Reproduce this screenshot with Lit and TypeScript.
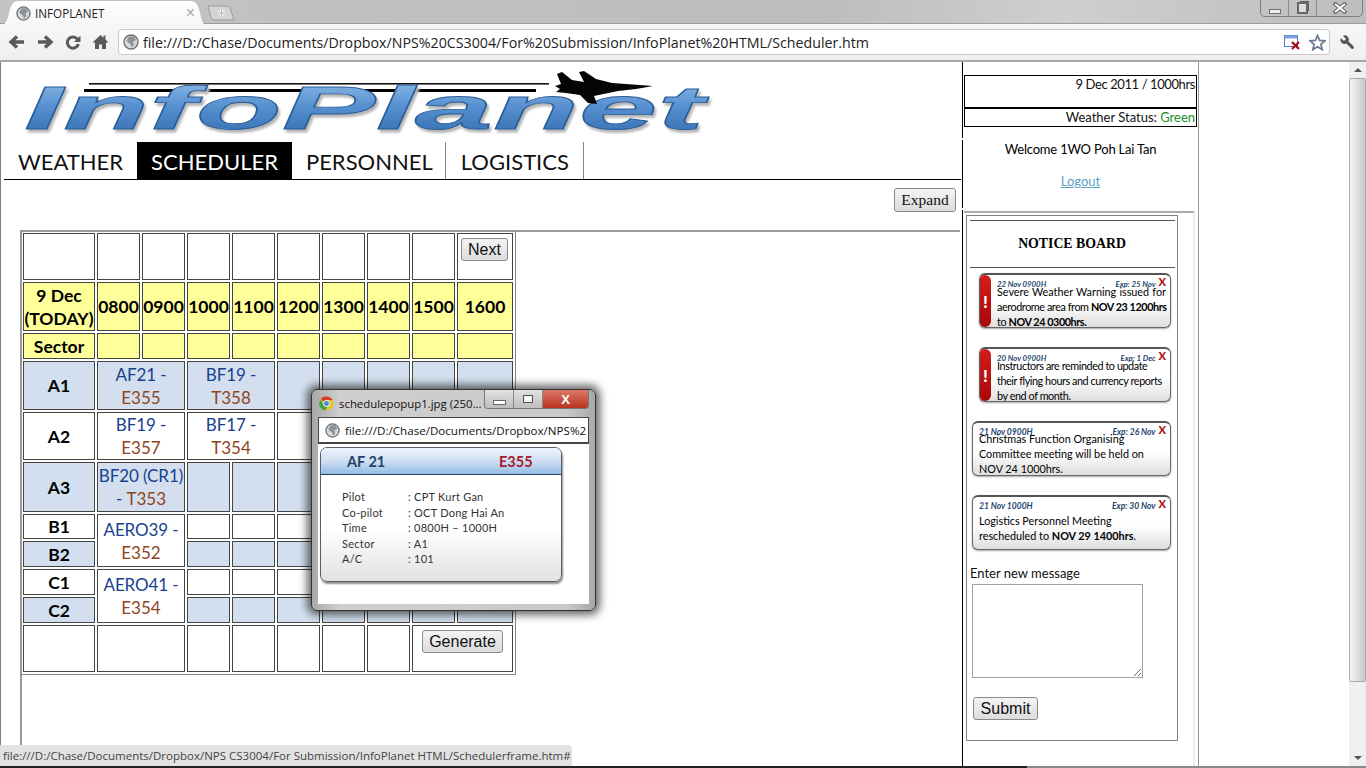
import { LitElement, html, css, svg } from 'lit';
import { customElement } from 'lit/decorators.js';
import { unsafeHTML } from 'lit/directives/unsafe-html.js';

const globe = (size: number) => html`
  <svg width=${size} height=${size} viewBox="0 0 16 16" aria-hidden="true">
    <circle cx="8" cy="8" r="7" fill="#d6dade" stroke="#6d6f72" stroke-width="1.4" />
    <path d="M6 2.5 L11 2.5 L13 6 L10 8 L11 11 L8.5 13.5 L7.5 10 L5 8.5 L3.5 6.5Z" fill="#8e9397" />
  </svg>
`;

type Cell = { t?: string; b?: string; span?: number; rows?: number };
type Row = { h: number; cls: string; head?: string; cells: Cell[] };

const blanks = (n: number): Cell[] => Array.from({ length: n }, () => ({}));

const ROWS: Row[] = [
  { h: 47, cls: 'plain', head: '', cells: blanks(8) },
  { h: 49, cls: 'yellow', head: '9 Dec<br>(TODAY)', cells: [] },
  { h: 26, cls: 'yellow', head: 'Sector', cells: blanks(9) },
  { h: 49, cls: 'blue', head: 'A1', cells: [{ t: 'AF21 -', b: 'E355', span: 2 }, { t: 'BF19 -', b: 'T358', span: 2 }, ...blanks(5)] },
  { h: 48, cls: 'plain', head: 'A2', cells: [{ t: 'BF19 -', b: 'E357', span: 2 }, { t: 'BF17 -', b: 'T354', span: 2 }, ...blanks(5)] },
  { h: 50, cls: 'blue', head: 'A3', cells: [{ t: 'BF20 (CR1)', b: 'T353', span: 2 }, ...blanks(7)] },
  { h: 25, cls: 'plain', head: 'B1', cells: [{ t: 'AERO39 -', b: 'E352', span: 2, rows: 2 }, ...blanks(7)] },
  { h: 26, cls: 'blue', head: 'B2', cells: blanks(7) },
  { h: 26, cls: 'plain', head: 'C1', cells: [{ t: 'AERO41 -', b: 'E354', span: 2, rows: 2 }, ...blanks(7)] },
  { h: 26, cls: 'blue', head: 'C2', cells: blanks(7) },
];

const HOURS = ['0800', '0900', '1000', '1100', '1200', '1300', '1400', '1500', '1600'];

@customElement('schedule-table')
export class ScheduleTable extends LitElement {
  private renderRow(row: Row, i: number) {
    if (i === 0) {
      return html`<tr style="height:${row.h}px" class=${row.cls}>
        <td></td>${row.cells.map(() => html`<td></td>`)}
        <td class="top"><button class="btn next">Next</button></td>
      </tr>`;
    }
    if (i === 1) {
      return html`<tr style="height:${row.h}px" class=${row.cls}>
        <th>${unsafeHTML(row.head)}</th>${HOURS.map((h) => html`<th>${h}</th>`)}
      </tr>`;
    }
    return html`<tr style="height:${row.h}px" class=${row.cls}>
      <th>${unsafeHTML(row.head)}</th>
      ${row.cells.map(
        (c) => html`<td colspan=${c.span ?? 1} rowspan=${c.rows ?? 1} class=${c.rows ? 'merged' : ''}>
          ${c.t
            ? html`<span class="flight">${c.t}</span>
                <div class="codeline">${c.t === 'BF20 (CR1)' ? html`<span class="flight">- </span>` : ''}<span class="code">${c.b}</span></div>`
            : ''}
        </td>`
      )}
    </tr>`;
  }

  render() {
    return html`
      <table>
        <colgroup>
          <col style="width:72px" />
          ${HOURS.slice(0, 8).map(() => html`<col style="width:43px" />`)}
          <col style="width:56px" />
        </colgroup>
        ${ROWS.map((r, i) => this.renderRow(r, i))}
        <tr class="plain" style="height:47px">
          <td></td><td colspan="2"></td><td></td><td></td><td></td><td></td><td></td>
          <td colspan="2" class="top"><button class="btn generate">Generate</button></td>
        </tr>
      </table>
    `;
  }

  static styles = css`
    :host {
      display: block;
      margin: 0 2px 0 19px;
      height: 100%;
      border-top: 2px solid #999;
      border-left: 2px solid #999;
    }
    table {
      table-layout: fixed;
      width: 495px;
      margin: -1px 0 0 -1px;
      border-collapse: separate;
      border-spacing: 2px;
      border-right: 1px solid #888;
      border-bottom: 1px solid #888;
      font-family: Lato, sans-serif;
      font-size: 17.5px;
      line-height: 23px;
      color: #000;
    }
    td,
    th {
      box-sizing: border-box;
      padding: 0;
      border: 1px solid #444;
      text-align: center;
      vertical-align: middle;
      overflow: hidden;
    }
    td.top {
      vertical-align: top;
    }
    th {
      font-weight: 700;
    }
    .yellow td,
    .yellow th {
      background: #ffff99;
    }
    .blue td,
    .blue th {
      background: #d3dfee;
    }
    .plain td,
    .plain th,
    td.merged {
      background: #fff !important;
    }
    .flight {
      color: #173f8e;
      font-size: 17px;
      letter-spacing: -0.1px;
      white-space: nowrap;
    }
    .codeline {
      white-space: nowrap;
    }
    .code {
      color: #8f4420;
      font-size: 17px;
    }
    .btn {
      box-sizing: border-box;
      height: 23px;
      margin-top: 4px;
      padding: 0;
      border: 1px solid #8a8a8a;
      border-radius: 3px;
      background: linear-gradient(#f4f4f4, #dcdcdc);
      font-family: 'Liberation Sans', sans-serif;
      font-size: 16px;
      color: #111;
    }
    .next {
      width: 47px;
      display: block;
      margin-left: 3px;
    }
    .generate {
      width: 81px;
    }
  `;
}

type Notice = { date: string; exp: string; lines: string[]; alert?: boolean; low?: boolean; high?: boolean; just?: boolean };

const NOTICES: Notice[] = [
  {
    date: '22 Nov 0900H',
    exp: 'Exp: 25 Nov',
    alert: true,
    just: true,
    lines: ['Severe Weather Warning issued for', 'aerodrome area from <b>NOV 23 1200hrs</b>', 'to <b>NOV 24 0300hrs.</b>'],
  },
  {
    date: '20 Nov 0900H',
    exp: 'Exp: 1 Dec',
    alert: true,
    lines: ['Instructors are reminded to update', 'their flying hours and currency reports', 'by end of month.'],
  },
  {
    date: '21 Nov 0900H',
    exp: 'Exp: 26 Nov',
    high: true,
    lines: ['Christmas Function Organising', 'Committee meeting will be held on', 'NOV 24 1000hrs.'],
  },
  {
    date: '21 Nov 1000H',
    exp: 'Exp: 30 Nov',
    low: true,
    lines: ['Logistics Personnel Meeting', 'rescheduled to <b>NOV 29 1400hrs</b>.'],
  },
];

@customElement('notice-board')
export class NoticeBoard extends LitElement {
  render() {
    return html`
      <hr />
      <div class="title">NOTICE BOARD</div>
      <hr />
      <div class="list">
        ${NOTICES.map(
          (n) => html`
            <div class="card ${n.alert ? 'alert' : ''}">
              ${n.alert ? html`<div class="flag">!</div>` : ''}
              <div class="inner">
                <div class="meta">
                  <span>${n.date}</span>
                  <span class="exp">${n.exp}</span>
                  <span class="x">X</span>
                </div>
                <div class="text ${n.low ? 'low' : ''} ${n.high ? 'high' : ''} ${n.just ? 'just' : ''}">
                  ${n.lines.map((l) => html`<div class="line">${unsafeHTML(l)}</div>`)}
                </div>
              </div>
            </div>
          `
        )}
      </div>
      <div class="label">Enter new message</div>
      <textarea></textarea>
      <button class="submit">Submit</button>
    `;
  }

  static styles = css`
    :host {
      display: block;
      box-sizing: border-box;
      width: 212px;
      height: 526px;
      margin-left: 2px;
      border: 1px solid #808080;
      font-family: Lato, sans-serif;
    }
    hr {
      height: 1px;
      margin: 4px 2px 0 3px;
      border: 0;
      background: #555;
    }
    .title {
      height: 46px;
      display: flex;
      align-items: center;
      justify-content: center;
      font-family: 'Liberation Serif', serif;
      font-size: 13.8px;
      font-weight: 700;
    }
    .title + hr {
      margin-top: 0;
    }
    .list {
      display: flex;
      flex-direction: column;
      gap: 19px;
      margin-top: 5px;
      align-items: flex-end;
      padding-right: 6px;
    }
    .card {
      box-sizing: border-box;
      width: 199px;
      height: 55px;
      display: flex;
      overflow: hidden;
      border: 1px solid #666;
      border-top: 2px solid #555;
      border-radius: 6px;
      background: linear-gradient(#fff 55%, #dedede);
      box-shadow: 0 1px 2px rgba(0, 0, 0, 0.35);
    }
    .card.alert {
      width: 192px;
    }
    .flag {
      flex: none;
      width: 11px;
      display: flex;
      align-items: center;
      justify-content: center;
      background: linear-gradient(#d41c1c, #a80808);
      border-radius: 0 6px 6px 0;
      color: #fff;
      font-size: 17px;
      font-weight: 900;
    }
    .inner {
      flex: 1;
      min-width: 0;
      padding: 4px 4px 0 6px;
    }
    .meta {
      display: flex;
      height: 10px;
      font-size: 8.5px;
      line-height: 10px;
      font-style: italic;
      font-weight: 700;
      color: #25466e;
      white-space: nowrap;
    }
    .alert .meta {
      font-size: 7.8px;
    }
    .exp {
      margin-left: auto;
    }
    .x {
      margin-left: 3px;
      margin-top: -2px;
      color: #b01010;
      font-size: 11px;
      font-style: normal;
      font-weight: 900;
    }
    .text {
      margin-top: -4px;
      font-size: 10.8px;
      line-height: 14.8px;
      color: #000;
    }
    .alert .line {
      letter-spacing: -0.42px;
    }
    .text.high {
      margin-top: -5px;
    }
    .text.low {
      margin-top: 3px;
    }
    .line {
      white-space: nowrap;
    }
    .text.just .line:first-child {
      letter-spacing: 0;
      white-space: normal;
      text-align: justify;
      text-align-last: justify;
    }
    .label {
      margin: 14px 0 0 3px;
      font-size: 13px;
      line-height: 19px;
      color: #111;
    }
    textarea {
      display: block;
      box-sizing: border-box;
      width: 171px;
      height: 94px;
      margin: 1px 0 0 5px;
      border: 1px solid #a0a0a0;
    }
    .submit {
      display: block;
      box-sizing: border-box;
      width: 65px;
      height: 23px;
      margin: 19px 0 0 6px;
      padding: 0;
      border: 1px solid #8a8a8a;
      border-radius: 3px;
      background: linear-gradient(#f4f4f4, #dcdcdc);
      font-family: 'Liberation Sans', sans-serif;
      font-size: 16px;
      color: #111;
    }
  `;
}

const POPUP_ROWS = [
  ['Pilot', ': CPT Kurt Gan'],
  ['Co-pilot', ': OCT Dong Hai An'],
  ['Time', ': 0800H – 1000H'],
  ['Sector', ': A1'],
  ['A/C', ': 101'],
];

@customElement('popup-window')
export class PopupWindow extends LitElement {
  render() {
    return html`
      <div class="titlebar">
        <svg class="logo" width="15" height="15" viewBox="0 0 16 16" aria-hidden="true">
          <circle cx="8" cy="8" r="7.5" fill="#e2c52c" />
          <path d="M8 .5a7.5 7.5 0 0 1 6.5 3.75H8a3.75 3.75 0 0 0-3.4 2.2L2 2.6A7.5 7.5 0 0 1 8 .5z" fill="#d8392c" />
          <path d="M1.6 3.6 5 9.8a3.75 3.75 0 0 0 3.7 1.9L6.6 15.4A7.5 7.5 0 0 1 1.6 3.6z" fill="#3fa648" />
          <circle cx="8" cy="8" r="3.2" fill="#4a86d8" stroke="#fff" stroke-width="1" />
        </svg>
        <span class="name">schedulepopup1.jpg (250...</span>
        <div class="controls">
          <div class="ctl"><i class="min"></i></div>
          <div class="ctl"><i class="max"></i></div>
          <div class="ctl close">X</div>
        </div>
      </div>
      <div class="address">${globe(15)}<span>file:///D:/Chase/Documents/Dropbox/NPS%2</span></div>
      <div class="content">
        <div class="card">
          <div class="head"><span class="af">AF 21</span><span class="em">E355</span></div>
          <div class="rows">
            ${POPUP_ROWS.map((r) => html`<div class="row"><span>${r[0]}</span><span>${r[1]}</span></div>`)}
          </div>
        </div>
      </div>
    `;
  }

  static styles = css`
    :host {
      position: absolute;
      left: 311px;
      top: 389px;
      box-sizing: border-box;
      width: 285px;
      height: 222px;
      padding: 0 6px 6px;
      border: 1px solid #333;
      border-radius: 6px;
      background: linear-gradient(90deg, #a8a8a8, #cfcfcf 10%, #c9c9c9 90%, #a8a8a8);
      box-shadow: 0 0 9px 4px rgba(0, 0, 0, 0.6);
      font-family: 'Open Sans', sans-serif;
      color: #111;
      display: flex;
      flex-direction: column;
    }
    .titlebar {
      flex: none;
      height: 27px;
      display: flex;
      align-items: flex-start;
    }
    .logo {
      margin: 6px 6px 0 1px;
    }
    .name {
      margin-top: 5px;
      margin-left: -1px;
      font-size: 11.4px;
      line-height: 18px;
      white-space: nowrap;
    }
    .controls {
      margin-left: auto;
      display: flex;
      height: 18px;
      border: 1px solid #777;
      border-top: 0;
      border-radius: 0 0 4px 4px;
      overflow: hidden;
    }
    .ctl {
      width: 28px;
      display: flex;
      align-items: center;
      justify-content: center;
      border-right: 1px solid #888;
      background: linear-gradient(#e2e2e2, #bdbdbd);
    }
    .ctl.close {
      width: 45px;
      border: 0;
      background: linear-gradient(#dd7a6a, #b8321f);
      color: #fff;
      font-family: 'Liberation Sans', sans-serif;
      font-size: 13px;
      font-weight: 700;
    }
    .min {
      width: 11px;
      height: 3px;
      margin-top: 6px;
      background: #fff;
      border: 1px solid #666;
    }
    .max {
      width: 8px;
      height: 6px;
      background: #fff;
      border: 1px solid #555;
      box-shadow: inset 0 0 0 1.5px #eee;
    }
    .address {
      flex: none;
      box-sizing: border-box;
      height: 27px;
      display: flex;
      align-items: center;
      gap: 5px;
      padding-left: 6px;
      background: #fff;
      border: 1px solid #444;
      border-bottom-width: 2px;
      font-size: 11.6px;
      white-space: nowrap;
      overflow: hidden;
    }
    .content {
      flex: 1;
      background: #fff;
      padding: 3px 0 0 2px;
    }
    .card {
      box-sizing: border-box;
      width: 242px;
      height: 135px;
      border: 1px solid #55606c;
      border-radius: 7px;
      background: linear-gradient(#fff 60%, #e2e2e2);
      box-shadow: 1px 2px 2px rgba(0, 0, 0, 0.45);
      overflow: hidden;
      font-family: Lato, sans-serif;
    }
    .head {
      box-sizing: border-box;
      height: 27px;
      display: flex;
      align-items: center;
      padding-left: 26px;
      border-bottom: 1px solid #2c3e55;
      background: linear-gradient(#eef4fb, #cfdff2 50%, #94bce6);
      font-size: 14.5px;
      font-weight: 700;
    }
    .af {
      width: 152px;
      color: #24436f;
    }
    .em {
      color: #a61b2c;
    }
    .rows {
      padding: 14px 0 0 21px;
      font-size: 11px;
      line-height: 15.6px;
      letter-spacing: 0.25px;
      color: #333;
    }
    .row {
      display: grid;
      grid-template-columns: 66px 1fr;
    }
  `;
}

@customElement('app-root')
export class AppRoot extends LitElement {
  private renderChrome() {
    return html`
      <div class="tabstrip">
        <div class="tab">
          ${globe(15)}
          <span class="tabtitle">INFOPLANET</span>
          <span class="tabclose">×</span>
        </div>
        <svg class="newtab" width="28" height="16" viewBox="0 0 28 16" aria-hidden="true">
          <path d="M1 1 H20 Q22 1 23 3 L27 15 H7 Q5 15 4 13Z" fill="#d4d4d4" stroke="#9a9a9a" />
          <path d="M11 8 h7 M14.5 4.5 v7" stroke="#fff" stroke-width="3" />
          <path d="M11 8 h7 M14.5 4.5 v7" stroke="#a8a8a8" stroke-width="1" />
        </svg>
        <div class="winctl">
          <div class="wc"><i class="wmin"></i></div>
          <div class="wc"><i class="wmax"></i></div>
          <div class="wc wclose">
            <svg width="16" height="12" viewBox="0 0 16 12" aria-hidden="true">
              <path d="M2 1 L14 11 M14 1 L2 11" stroke="#666" stroke-width="4" />
              <path d="M3 2 L13 10 M13 2 L3 10" stroke="#fff" stroke-width="2" />
            </svg>
          </div>
        </div>
      </div>
      <div class="toolbar">
        <svg class="tool" width="18" height="16" viewBox="0 0 18 16" aria-hidden="true">
          <path d="M16 8 H4 M9 2.5 L3 8 L9 13.5" fill="none" stroke="#5a5a5a" stroke-width="3.4" />
        </svg>
        <svg class="tool" width="18" height="16" viewBox="0 0 18 16" aria-hidden="true">
          <path d="M2 8 H14 M9 2.5 L15 8 L9 13.5" fill="none" stroke="#5a5a5a" stroke-width="3.4" />
        </svg>
        <svg class="tool" width="16" height="16" viewBox="0 0 16 16" aria-hidden="true">
          <path d="M12.6 5.4 A5.6 5.6 0 1 0 13.4 10" fill="none" stroke="#5a5a5a" stroke-width="3" />
          <path d="M15.5 1.5 V8 H9Z" fill="#5a5a5a" />
        </svg>
        <svg class="tool" width="17" height="16" viewBox="0 0 16 16" aria-hidden="true">
          <path d="M8 1 L0 8.5 H2.5 V15 H6.5 V10.5 H9.5 V15 H13.5 V8.5 H16 L13 5.6 V1.5 H11 V3.8Z" fill="#5a5a5a" />
        </svg>
        <div class="omnibox">
          ${globe(16)}
          <span class="url">file:///D:/Chase/Documents/Dropbox/NPS%20CS3004/For%20Submission/InfoPlanet%20HTML/Scheduler.htm</span>
          <svg class="blocked" width="17" height="16" viewBox="0 0 17 16" aria-hidden="true">
            <rect x="0.5" y="1.5" width="13" height="11" fill="#fff" stroke="#4d7fc0" />
            <rect x="0.5" y="1.5" width="13" height="3" fill="#7ba6dc" />
            <path d="M8 8 L15 15 M15 8 L8 15" stroke="#a6121e" stroke-width="2.4" />
          </svg>
          <svg class="star" width="17" height="17" viewBox="0 0 24 24" aria-hidden="true">
            <path d="M12 2 L15 9 L22.5 9.6 L16.8 14.5 L18.6 22 L12 18 L5.4 22 L7.2 14.5 L1.5 9.6 L9 9Z" fill="#fff" stroke="#68788f" stroke-width="2.4" />
          </svg>
        </div>
        <svg class="wrench" width="17" height="17" viewBox="0 0 24 24" aria-hidden="true">
          <g transform="translate(24 0) scale(-1 1)">
            <path d="M14.7 6.3a1 1 0 0 0 0 1.4l1.6 1.6a1 1 0 0 0 1.4 0l3.77-3.77a6 6 0 0 1-7.94 7.94l-6.91 6.91a2.12 2.12 0 0 1-3-3l6.91-6.91a6 6 0 0 1 7.94-7.94l-3.76 3.76z" fill="#555" />
          </g>
        </svg>
      </div>
    `;
  }

  private renderLogo() {
    return html`
      <svg class="logotype" width="720" height="78" viewBox="0 62 720 78" role="img" aria-label="InfoPlanet">
        <defs>
          <linearGradient id="logofill" x1="0" y1="0" x2="0" y2="1">
            <stop offset="0" stop-color="#9cc4ec" />
            <stop offset="0.45" stop-color="#5a93d2" />
            <stop offset="1" stop-color="#2f69ad" />
          </linearGradient>
        </defs>
        <rect x="89" y="83" width="460" height="1.6" fill="#111" />
        <rect x="84" y="89" width="452" height="3" fill="#000" />
        ${svg`<text class="logotext" x="24" y="129" textLength="680" lengthAdjust="spacingAndGlyphs" fill="url(#logofill)">InfoPlanet</text>`}
        <path d="M653 86 C640 85 625 84 612 83 L596 79 L584 71 L579 72 L584 82 L572 80 L562 72 L557 74 L561 84 L555 86 L560 89 L556 92 L566 93 L580 95 L588 103 L597 104 L594 96 L618 91 C630 90 642 88 653 86Z" fill="#050505" />
      </svg>
    `;
  }

  render() {
    return html`
      ${this.renderChrome()}
      <div class="page">
        <div class="leftframe">
          ${this.renderLogo()}
          <nav>
            <a>WEATHER</a>
            <a class="active">SCHEDULER</a>
            <a class="sep">PERSONNEL</a>
            <a class="sep last">LOGISTICS</a>
          </nav>
          <div class="actions"><button class="expand">Expand</button></div>
          <schedule-table></schedule-table>
        </div>
        <div class="rightframe">
          <div class="seg status">
            <div class="box date">9 Dec 2011 / 1000hrs</div>
            <div class="box">Weather Status: <span class="green">Green</span></div>
          </div>
          <div class="seg welcome">
            <div class="hello">Welcome 1WO Poh Lai Tan</div>
            <a class="logout">Logout</a>
          </div>
          <div class="seg boardwrap">
            <div class="boardinner"><notice-board></notice-board></div>
          </div>
        </div>
        <div class="blank"></div>
        <div class="scrollbar">
          <div class="arrow up"></div>
          <div class="thumb"></div>
          <div class="track"></div>
          <div class="arrow down"></div>
        </div>
      </div>
      <div class="pagefoot"></div>
      <popup-window></popup-window>
      <div class="statusbubble">file:///D:/Chase/Documents/Dropbox/NPS CS3004/For Submission/InfoPlanet HTML/Schedulerframe.htm#</div>
    `;
  }

  static styles = css`
    :host {
      display: flex;
      flex-direction: column;
      position: relative;
      width: 1366px;
      height: 768px;
      overflow: hidden;
      background: #fff;
      font-family: Lato, sans-serif;
      color: #000;
    }
    .tabstrip {
      flex: none;
      height: 24px;
      display: flex;
      align-items: flex-start;
      background: linear-gradient(90deg, #c3c3c3, #bdbdbd 60%, #cfcfcf 78%, #bdbdbd);
      border-bottom: 1px solid #9c9c9c;
      box-sizing: border-box;
    }
    .tab {
      width: 206px;
      height: 24px;
      margin-top: 1px;
      display: flex;
      align-items: center;
      padding-left: 16px;
      box-sizing: border-box;
      background: linear-gradient(#fff, #f6f6f6);
      clip-path: path('M0 24 C6 24 7 20 9 12 C11 3 13 0 19 0 H190 C196 0 198 3 200 12 C202 20 203 24 206 24Z');
    }
    .tabtitle {
      margin-left: 4px;
      font-family: 'Open Sans', sans-serif;
      font-size: 11.7px;
      color: #222;
    }
    .tabclose {
      margin-left: auto;
      margin-right: 11px;
      font-family: 'Liberation Sans', sans-serif;
      font-size: 16px;
      color: #a8a8a8;
    }
    .newtab {
      margin: 5px 0 0 1px;
    }
    .winctl {
      margin-left: auto;
      margin-right: 3px;
      display: flex;
      height: 17px;
      box-sizing: border-box;
      border: 1px solid #7e7e7e;
      border-top: 0;
      border-radius: 0 0 5px 5px;
    }
    .wc {
      width: 27px;
      display: flex;
      align-items: center;
      justify-content: center;
      border-right: 1px solid #8a8a8a;
    }
    .wclose {
      width: 45px;
      border-right: 0;
    }
    .wmin {
      width: 10px;
      height: 3px;
      margin-top: 6px;
      background: #eee;
      border: 1px solid #707070;
    }
    .wmax {
      width: 7px;
      height: 8px;
      border: 2px solid #666;
      background: #ddd;
      box-shadow: 2px -2px 0 -1px #666;
    }
    .toolbar {
      flex: none;
      height: 37px;
      box-sizing: border-box;
      display: flex;
      align-items: center;
      padding-left: 8px;
      background: linear-gradient(#f7f7f7, #efefef);
      border-bottom: 1px solid #a2a2a2;
    }
    .tool {
      flex: none;
      margin-right: 10px;
    }
    .tool:nth-child(3) {
      margin-left: 1px;
      margin-right: 11px;
    }
    .tool:nth-child(4) {
      margin-right: 9px;
    }
    .omnibox {
      box-sizing: border-box;
      width: 1212px;
      height: 26px;
      display: flex;
      align-items: center;
      padding: 0 3px 0 4px;
      background: #fff;
      border: 1px solid #c8c8c8;
      border-radius: 4px;
    }
    .url {
      margin-left: 4px;
      font-family: 'Open Sans', sans-serif;
      font-size: 14.22px;
      color: #222;
      white-space: nowrap;
    }
    .blocked {
      margin-left: auto;
    }
    .star {
      margin-left: 8px;
    }
    .wrench {
      margin-left: 9px;
    }
    .page {
      flex: 1;
      min-height: 0;
      display: flex;
      border-top: 1px solid #aaa;
    }
    .pagefoot {
      flex: none;
      height: 2px;
      background: linear-gradient(90deg, #222 1027px, #888 1027px);
    }
    .leftframe {
      flex: none;
      box-sizing: border-box;
      width: 962px;
      display: flex;
      flex-direction: column;
      border-left: 1px solid #808080;
    }
    .logotype {
      flex: none;
      margin-left: -1px;
    }
    .logotext {
      font-family: 'Liberation Sans', sans-serif;
      font-size: 62px;
      font-style: italic;
      font-weight: 700;
      stroke: #2a5c98;
      stroke-width: 0.8px;
      filter: drop-shadow(2px 3px 1px #b5b5b5);
    }
    nav {
      flex: none;
      margin: 2px 1px 0 3px;
      height: 38px;
      box-sizing: border-box;
      display: flex;
      border-bottom: 1px solid #000;
      font-size: 22px;
    }
    nav a {
      display: flex;
      align-items: center;
      padding: 2px 14px 0 14px;
      color: #111;
    }
    nav a.active {
      background: #000;
      color: #fff;
    }
    nav a.sep {
      padding: 2px 12px 0 14px;
      border-right: 1px solid #888;
    }
    nav a.sep.last {
      padding: 2px 14px 0 15px;
    }
    .actions {
      flex: none;
      display: flex;
      justify-content: flex-end;
      padding: 8px 6px 18px 0;
    }
    .expand {
      box-sizing: border-box;
      width: 62px;
      height: 24px;
      padding: 0;
      border: 1px solid #8a8a8a;
      border-radius: 3px;
      background: linear-gradient(#f4f4f4, #dcdcdc);
      font-family: 'Liberation Serif', serif;
      font-size: 15.5px;
      color: #111;
    }
    schedule-table {
      flex: 1;
      min-height: 0;
    }
    .rightframe {
      flex: none;
      box-sizing: border-box;
      width: 237px;
      display: flex;
      flex-direction: column;
      gap: 2px;
      border-right: 1px solid #999;
      font-size: 13px;
    }
    .seg {
      border-left: 1px solid #000;
    }
    .status {
      height: 76px;
      padding: 13px 0 0 1px;
      box-sizing: border-box;
    }
    .box {
      box-sizing: border-box;
      width: 233px;
      height: 19px;
      padding-right: 1px;
      border: 1px solid #000;
      text-align: right;
      line-height: 17px;
      color: #111;
      white-space: nowrap;
    }
    .box.date {
      height: 33px;
      letter-spacing: -0.4px;
    }
    .green {
      color: #1b8f1b;
    }
    .welcome {
      height: 68px;
      box-sizing: border-box;
      text-align: center;
      line-height: 18px;
    }
    .hello {
      letter-spacing: -0.2px;
    }
    .logout {
      display: block;
      margin-top: 14px;
      color: #5c9fc5;
      text-decoration: underline;
    }
    .boardwrap {
      flex: 1;
      min-height: 0;
    }
    .boardinner {
      box-sizing: border-box;
      height: 100%;
      margin: 1px 3px 0 1px;
      padding-top: 2px;
      border-top: 2px solid #aaa;
      border-right: 2px solid #eee;
    }
    .blank {
      flex: none;
      width: 150px;
    }
    .scrollbar {
      flex: 1;
      display: flex;
      flex-direction: column;
      background: #f0f0f0;
    }
    .arrow {
      flex: none;
      height: 16px;
      display: flex;
      align-items: center;
      justify-content: center;
    }
    .arrow::before {
      content: '';
      border-left: 4px solid transparent;
      border-right: 4px solid transparent;
    }
    .arrow.up::before {
      border-bottom: 4px solid #555;
    }
    .arrow.down::before {
      border-top: 4px solid #555;
    }
    .thumb {
      flex: none;
      height: 604px;
      box-sizing: border-box;
      border: 1px solid #aaa;
      border-radius: 2px;
      background: linear-gradient(90deg, #f4f4f4, #dcdcdc 55%, #c8c8c8);
    }
    .track {
      flex: 1;
    }
    .statusbubble {
      position: absolute;
      left: 0;
      top: 745px;
      box-sizing: border-box;
      width: 572px;
      height: 21px;
      padding-left: 3px;
      background: #e2e2e2;
      border-radius: 0 4px 0 0;
      font-family: 'Open Sans', sans-serif;
      font-size: 11.5px;
      line-height: 21px;
      color: #444;
      white-space: nowrap;
    }
  `;
}
